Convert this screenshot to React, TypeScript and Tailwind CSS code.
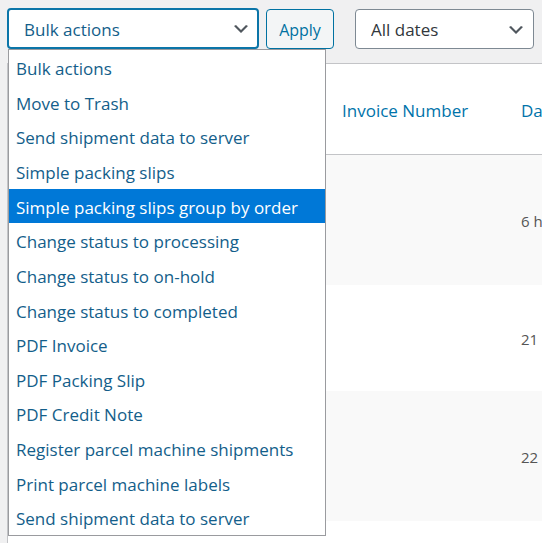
import { useState } from "react";

const actions = [
  "Bulk actions",
  "Move to Trash",
  "Send shipment data to server",
  "Simple packing slips",
  "Simple packing slips group by order",
  "Change status to processing",
  "Change status to on-hold",
  "Change status to completed",
  "PDF Invoice",
  "PDF Packing Slip",
  "PDF Credit Note",
  "Register parcel machine shipments",
  "Print parcel machine labels",
  "Send shipment data to server",
];

const rows = [
  { age: "6 h", style: "h-[130px] bg-[#f9f9f9]" },
  { age: "21", style: "h-[106px] bg-white" },
  { age: "22", style: "h-[130px] bg-[#f9f9f9]" },
  { age: "", style: "h-[22px] bg-white" },
];

function Chevron() {
  return (
    <svg
      viewBox="0 0 20 20"
      className="pointer-events-none absolute top-[11px] right-2 size-5"
      aria-hidden="true"
    >
      <path d="M5 6l5 5 5-5 2 1-7 7-7-7 2-1z" fill="#50575e" />
    </svg>
  );
}

export default function App() {
  const [active, setActive] = useState(4);

  return (
    <div className="min-h-screen overflow-hidden bg-[#f0f0f1] pt-2 pl-[7px] font-['Open_Sans','Noto_Sans',sans-serif] text-[17px] text-[#32373c]">
      <div className="flex items-center pr-2">
        <div className="relative min-w-0 flex-1">
          <select
            aria-label="Bulk actions"
            className="block h-[41px] w-full appearance-none rounded border-2 border-[#0b75a8] bg-white pt-[3px] pr-8 pl-[15px] text-[#135e8a] outline-none"
          >
            <option>Bulk actions</option>
          </select>
          <Chevron />
          <ul
            role="listbox"
            aria-label="Bulk actions list"
            className="absolute top-[41px] left-px z-10 grid h-[487px] w-[318px] auto-rows-fr border border-[#9a9b9f] bg-white"
          >
            {actions.map((action, i) => (
              <li
                key={i}
                role="option"
                aria-selected={i === active}
                onMouseEnter={() => setActive(i)}
                className={
                  i === active
                    ? "flex items-center bg-[#0078d7] px-[7px] pt-[3px] whitespace-nowrap text-white"
                    : "flex items-center px-[7px] pt-[3px] whitespace-nowrap text-[#135e8a]"
                }
              >
                {action}
              </li>
            ))}
          </ul>
        </div>
        <button
          type="button"
          className="ml-[7px] h-10 w-[68px] rounded border border-[#0071a1] bg-[#f3f5f6] pt-[3px] text-base text-[#0071a1]"
        >
          Apply
        </button>
        <div className="relative ml-[21px] w-[179px]">
          <select
            aria-label="Filter by date"
            className="block h-10 w-full appearance-none rounded border border-[#7e8993] bg-white pt-[3px] pr-8 pl-[15px] outline-none"
          >
            <option>All dates</option>
          </select>
          <Chevron />
        </div>
      </div>

      <table className="mt-[14px] w-full table-fixed border-separate border-spacing-0 border-t border-l border-[#c3c4c7] bg-white text-left">
        <thead>
          <tr className="h-[91px] text-[#0073aa]">
            <td className="border-b border-[#c3c4c7]" />
            <th scope="col" className="w-[179px] border-b border-[#c3c4c7] pt-[3px] font-normal">
              <a href="#invoice">Invoice Number</a>
            </th>
            <th scope="col" className="w-[21px] border-b border-[#c3c4c7] pt-[3px] font-normal">
              <a href="#date">Da</a>
            </th>
          </tr>
        </thead>
        <tbody>
          {rows.map((row, i) => (
            <tr key={i} className={row.style}>
              <td />
              <td />
              <td className="pt-[2px] text-[15px] whitespace-nowrap text-[#555]">{row.age}</td>
            </tr>
          ))}
        </tbody>
      </table>
    </div>
  );
}
